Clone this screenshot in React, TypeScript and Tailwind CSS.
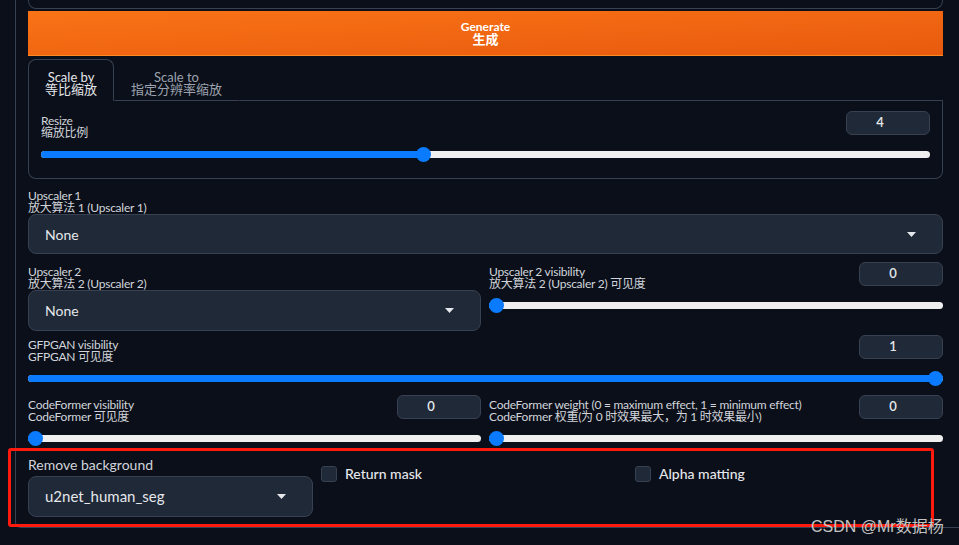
import React from 'react';

const FONT = { fontFamily: 'Lato, "Noto Sans CJK SC", sans-serif' };

const Caret = () => (
  <svg width="9" height="5" viewBox="0 0 9 5" className="shrink-0">
    <path d="M0 0 L9 0 L4.5 5 Z" fill="#e5e7eb" />
  </svg>
);

const Label: React.FC<{ en: string; zh: string }> = ({ en, zh }) => (
  <div className="text-[12px] leading-[12px] tracking-[-0.25px] text-[#d1d5db] whitespace-nowrap">
    <div>{en}</div>
    <div>{zh}</div>
  </div>
);

const Dropdown: React.FC<{ value: string; h?: string; text?: string }> = ({ value, h = 'h-[41px]', text = 'text-[14px]' }) => (
  <div className={`${h} rounded-[8px] bg-[#1f2937] border border-[#374151] flex items-center justify-between pl-[16px] pr-[26px]`}>
    <span className={`${text} text-[#e5e7eb]`}>{value}</span>
    <Caret />
  </div>
);

const Slider: React.FC<{ value: number; min: number; max: number }> = ({ value, min, max }) => {
  const frac = (value - min) / (max - min);
  const thumb = `calc(${frac} * (100% - 15px))`;
  return (
    <div className="relative h-[15px] mt-[8px]">
      <div className="absolute left-0 right-0 top-[4px] h-[7px] rounded-full bg-[#efefef]" />
      <div className="absolute left-0 top-[4px] h-[7px] rounded-full bg-[#0a7bff]" style={{ width: `calc(${thumb} + 8px)` }} />
      <div className="absolute top-0 w-[15px] h-[15px] rounded-full bg-[#0a7bff]" style={{ left: thumb }} />
    </div>
  );
};

const SliderBlock: React.FC<{ en: string; zh: string; value: number; min: number; max: number }> = ({ en, zh, value, min, max }) => (
  <div>
    <div className="flex justify-between items-start">
      <div className="pt-[4px]">
        <Label en={en} zh={zh} />
      </div>
      <div className="w-[84px] h-[24px] rounded-[6px] bg-[#1f2937] border border-[#374151] flex items-center justify-center pr-[16px] text-[13px] font-semibold text-[#e5e7eb]">
        {value}
      </div>
    </div>
    <Slider value={value} min={min} max={max} />
  </div>
);

const Checkbox: React.FC<{ label: string }> = ({ label }) => (
  <div className="flex items-center gap-[8px]">
    <div className="w-[16px] h-[16px] rounded-[3px] bg-[#1f2937] border border-[#374151]" />
    <span className="text-[14px] leading-[16px] font-medium text-[#e5e7eb]">{label}</span>
  </div>
);

export default function App() {
  return (
    <div className="relative w-[959px] h-[545px] overflow-hidden bg-[#0b0f19]" style={FONT}>
      <div className="ml-[15px] w-[960px] h-[528px] border-l border-b border-[#374151] rounded-bl-[6px] pl-[12px]">
        <div className="w-[915px] flex flex-col">
          {/* previous box */}
          <div className="h-[9px] border-x border-b border-[#374151] rounded-b-[8px]" />

          {/* generate */}
          <div className="mt-[2px] h-[45px] bg-gradient-to-br from-[#f97316] to-[#e85a0e] border-b border-[#ff8a22] flex flex-col items-center justify-center text-white font-bold">
            <div className="text-[12px] leading-[12px]">Generate</div>
            <div className="text-[13px] leading-[13px]">生成</div>
          </div>

          {/* tabs */}
          <div className="mt-[3px] flex h-[42px]">
            <div className="px-[16px] pt-[11px] border-x border-t border-[#374151] rounded-t-[8px] text-center text-[13px] leading-[12px] text-[#e5e7eb]">
              <div>Scale by</div>
              <div>等比缩放</div>
            </div>
            <div className="px-[16px] pt-[11px] border-x border-t border-transparent border-b border-b-[#374151] text-center text-[13px] leading-[12px] text-[#9ca3af]">
              <div>Scale to</div>
              <div>指定分辨率缩放</div>
            </div>
            <div className="flex-1 border-b border-[#374151]" />
          </div>
          <div className="border-x border-b border-[#374151] rounded-b-[8px] px-[12px] pt-[10px] pb-[16px]">
            <SliderBlock en="Resize" zh="缩放比例" value={4} min={1} max={8} />
          </div>

          {/* upscaler 1 */}
          <div className="mt-[11px]">
            <Label en="Upscaler 1" zh="放大算法 1 (Upscaler 1)" />
            <Dropdown value="None" h="h-[40px]" />
          </div>

          {/* upscaler 2 */}
          <div className="mt-[8px] flex gap-[8px] items-start">
            <div className="w-[453px] pt-[4px]">
              <Label en="Upscaler 2" zh="放大算法 2 (Upscaler 2)" />
              <Dropdown value="None" />
            </div>
            <div className="flex-1">
              <SliderBlock en="Upscaler 2 visibility" zh="放大算法 2 (Upscaler 2) 可见度" value={0} min={0} max={1} />
            </div>
          </div>

          {/* gfpgan */}
          <div className="mt-[4px]">
            <SliderBlock en="GFPGAN visibility" zh="GFPGAN 可见度" value={1} min={0} max={1} />
          </div>

          {/* codeformer */}
          <div className="mt-[9px] flex gap-[8px] items-start">
            <div className="w-[453px]">
              <SliderBlock en="CodeFormer visibility" zh="CodeFormer 可见度" value={0} min={0} max={1} />
            </div>
            <div className="flex-1">
              <SliderBlock
                en="CodeFormer weight (0 = maximum effect, 1 = minimum effect)"
                zh="CodeFormer 权重(为 0 时效果最大，为 1 时效果最小)"
                value={0}
                min={0}
                max={1}
              />
            </div>
          </div>

          {/* remove background */}
          <div className="mt-[11px] flex gap-[8px] items-start">
            <div className="w-[285px]">
              <div className="text-[14px] leading-[16px] text-[#d1d5db]">Remove background</div>
              <div className="mt-[3px]">
                <Dropdown value="u2net_human_seg" text="text-[15px]" />
              </div>
            </div>
            <div className="w-[306px] pt-[9px]">
              <Checkbox label="Return mask" />
            </div>
            <div className="flex-1 pt-[9px]">
              <Checkbox label="Alpha matting" />
            </div>
          </div>
        </div>
      </div>

      {/* annotation */}
      <div className="absolute left-[8px] top-[448px] w-[926px] h-[79px] border-[3px] border-[#ff1a0d] rounded-[3px] pointer-events-none" />
      <div
        className="absolute left-[811px] top-[517px] text-[16px] leading-[20px] text-[#c4c4c4] whitespace-nowrap"
        style={{ fontFamily: '"Liberation Sans", "Noto Sans CJK SC", sans-serif' }}
      >
        CSDN @Mr数据杨
      </div>
    </div>
  );
}
